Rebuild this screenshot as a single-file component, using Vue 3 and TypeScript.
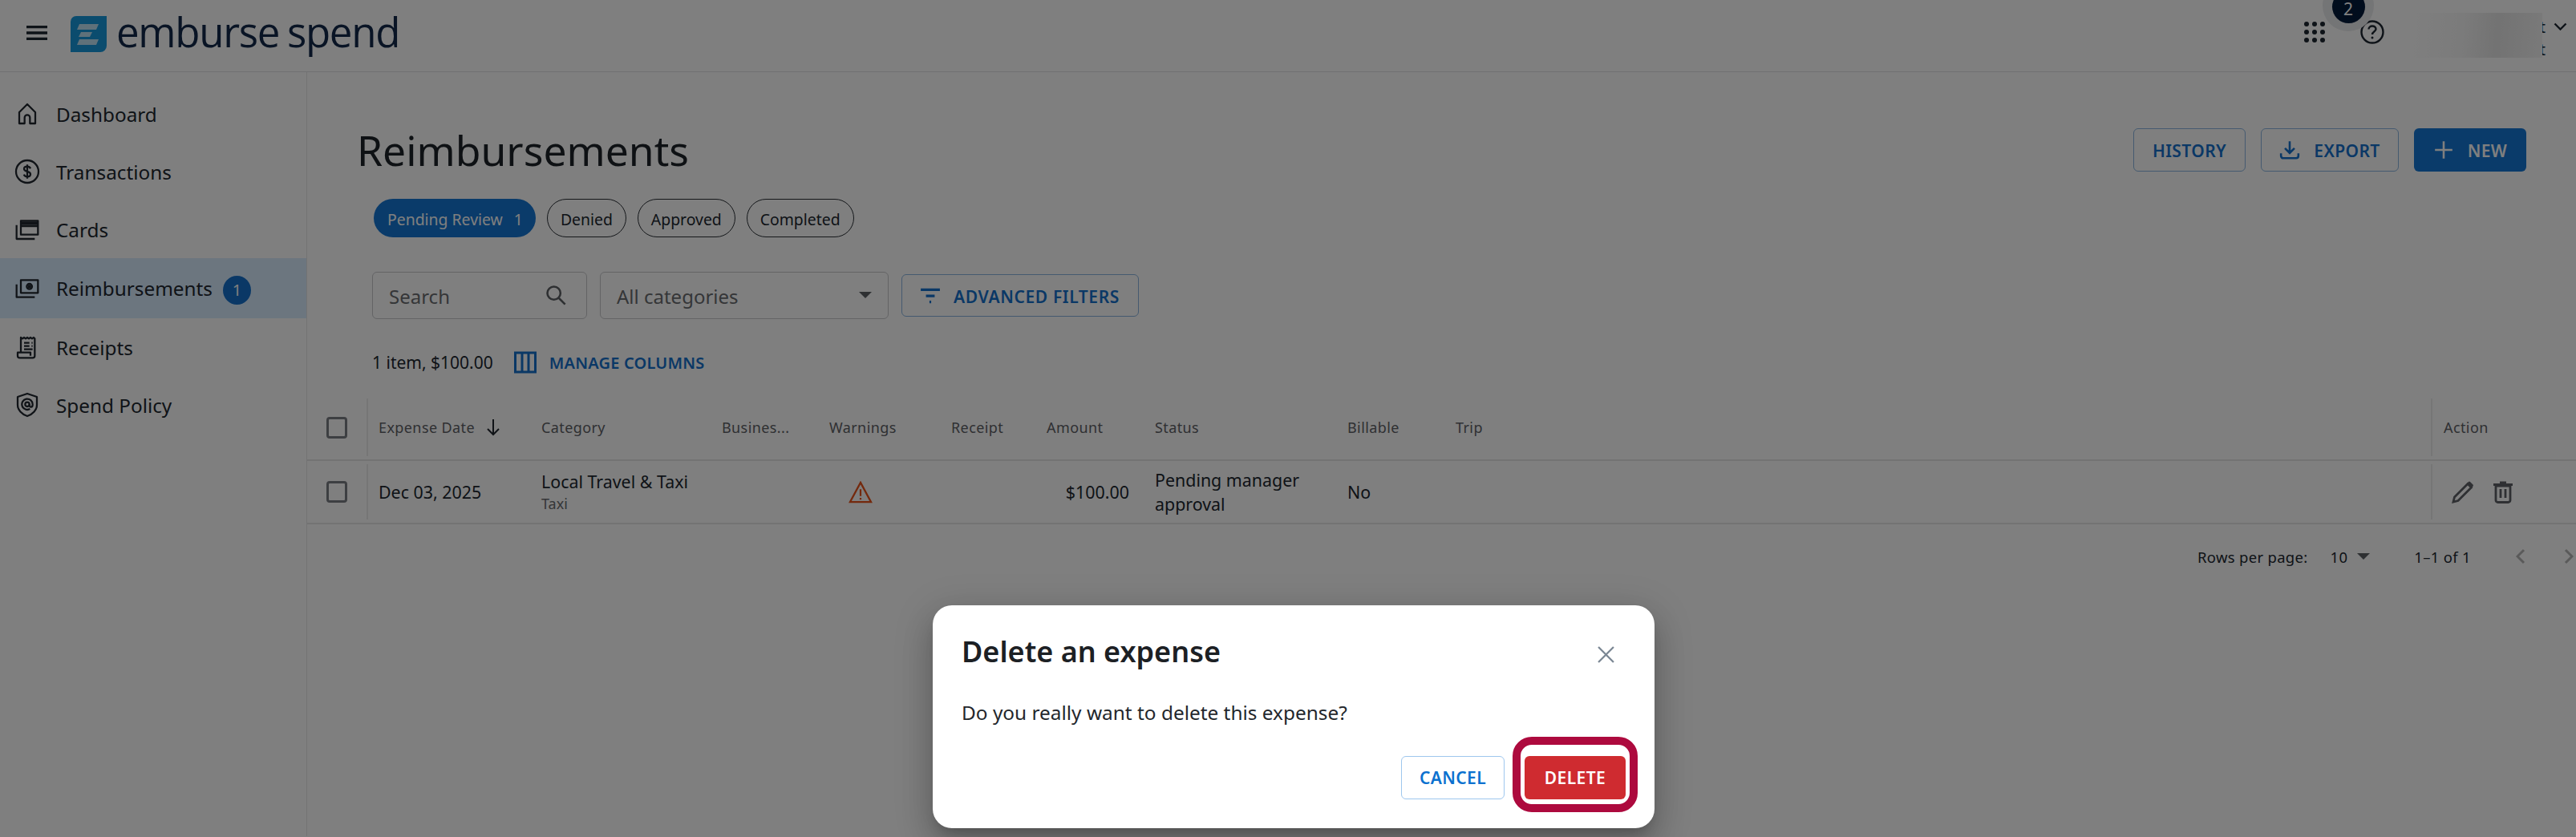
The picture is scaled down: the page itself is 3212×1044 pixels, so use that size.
<script setup lang="ts">
interface NavItem {
  label: string
  paths: string[]
  active?: boolean
  badge?: number
}

const navItems: NavItem[] = [
  { label: 'Dashboard', paths: ['M4.500 10.500 12 3l7.500 7.500V21h-5v-5.500a2.500 2.500 0 0 0-5 0V21h-5z'] },
  {
    label: 'Transactions',
    paths: [
      'M12 1.500a10.500 10.500 0 1 0 0 21 10.500 10.500 0 0 0 0-21z',
      'M15 9.200c-.5-1.200-1.600-1.900-3-1.900-1.700 0-3 .9-3 2.300 0 3.100 6 1.600 6 4.800 0 1.400-1.300 2.300-3 2.300-1.500 0-2.700-.7-3.100-2M12 5.500v13',
    ],
  },
  {
    label: 'Cards',
    paths: ['M6 4h16v13H6z', 'M2 8v13h17', 'M6 7h16M6 9h16M6 5.500h16'],
  },
  {
    label: 'Reimbursements',
    active: true,
    badge: 1,
    paths: ['M6 4h16v12H6z', 'M2 8v12h17', 'M14 7.500a2.500 2.500 0 1 0 0 5 2.500 2.500 0 0 0 0-5z', 'M13.200 9.300h1.600v1.400h-1.600z'],
  },
  {
    label: 'Receipts',
    paths: ['M6 17V3l1.500 1L9 3l1.500 1L12 3l1.500 1L15 3l1.500 1L18 3l1 1v16a2 2 0 0 1-2 2H5a2 2 0 0 1-2-2v-3h12v3', 'M9 8h5M16 8h1M9 11h5M16 11h1M9 14h8'],
  },
  {
    label: 'Spend Policy',
    paths: [
      'M12 1.500 21 4.500V12c0 4.800-3.800 8.800-9 10.500C6.800 20.800 3 16.800 3 12V4.500z',
      'M12 9.500a2 2 0 1 0 0 4 2 2 0 0 0 0-4z',
      'M14 11.500v1c0 2 3 2 3-.5v-.5a5 5 0 1 0-2.500 4.300',
    ],
  },
]

const statusChips = ['Denied', 'Approved', 'Completed']
const columns = ['Category', 'Busines...', 'Warnings', 'Receipt', 'Amount', 'Status', 'Billable', 'Trip']
</script>

<template>
  <div class="app">
    <header class="topbar">
      <svg class="menu" viewBox="0 0 26 18" aria-hidden="true">
        <path d="M0 1.500h26M0 9h26M0 16.500h26" />
      </svg>
      <svg class="logo-mark" viewBox="0 0 45 45" aria-hidden="true">
        <path class="logo-tile" d="M7 0h38v37a8 8 0 0 1-8 8H0V7a7 7 0 0 1 7-7z" />
        <path class="logo-bar" d="M11 10h24l-3 7H8zM13 20h14l-3 6H10zM11 29h24l-3 7H8z" />
      </svg>
      <span class="wordmark">emburse spend</span>
      <div class="top-actions">
        <svg class="apps" viewBox="0 0 26 26" aria-hidden="true">
          <circle v-for="p in [3, 13, 23].flatMap((y) => [3, 13, 23].map((x) => [x, y]))" :key="p.join()" :cx="p[0]" :cy="p[1]" r="3" />
        </svg>
        <svg class="help" viewBox="0 0 30 30" aria-hidden="true">
          <circle cx="15" cy="15" r="13.500" />
          <path d="M10.500 11.500c0-2.500 2-4 4.500-4s4.500 1.500 4.500 3.800c0 3.400-4.500 3.200-4.500 6.700" />
          <circle class="help-dot" cx="15" cy="22" r="1.500" />
        </svg>
        <div class="account">
          <div class="account-lines">
            <span>t</span>
            <span>t</span>
          </div>
          <div class="account-blur" />
          <svg class="account-caret" viewBox="0 0 16 10" aria-hidden="true">
            <path d="M1 1.500 8 8.500l7-7" />
          </svg>
        </div>
      </div>
      <div class="notify-halo"><span class="notify">2</span></div>
    </header>

    <div class="body">
      <nav class="sidebar">
        <a v-for="item in navItems" :key="item.label" class="nav-item" :class="{ active: item.active }">
          <svg class="nav-icon" viewBox="0 0 24 24" aria-hidden="true">
            <path v-for="d in item.paths" :key="d" :d="d" />
          </svg>
          <span>{{ item.label }}</span>
          <span v-if="item.badge" class="nav-badge">{{ item.badge }}</span>
        </a>
      </nav>

      <main class="main">
        <div class="page-head">
          <h1>Reimbursements</h1>
          <div class="head-actions">
            <button class="btn btn-outline history">HISTORY</button>
            <button class="btn btn-outline export">
              <svg class="btn-icon" viewBox="0 0 24 24" aria-hidden="true">
                <path d="M12 2v13M6.500 10l5.500 5.500 5.500-5.500M2 16v3a2.500 2.500 0 0 0 2.500 2.500h15A2.500 2.500 0 0 0 22 19v-3" />
              </svg>
              EXPORT
            </button>
            <button class="btn btn-fill new">
              <svg class="btn-icon" viewBox="0 0 24 24" aria-hidden="true">
                <path d="M12 2v20M2 12h20" />
              </svg>
              NEW
            </button>
          </div>
        </div>

        <div class="chips">
          <span class="chip chip-on">Pending Review<b>1</b></span>
          <span v-for="chip in statusChips" :key="chip" class="chip">{{ chip }}</span>
        </div>

        <div class="filters">
          <div class="field search">
            <span>Search</span>
            <svg viewBox="0 0 24 24" aria-hidden="true">
              <circle cx="10" cy="10" r="7" />
              <path d="m15 15 7 7" />
            </svg>
          </div>
          <div class="field select">
            <span>All categories</span>
            <i class="caret" />
          </div>
          <button class="btn btn-outline advanced">
            <svg class="btn-icon" viewBox="0 0 24 24" aria-hidden="true">
              <path d="M1 5h22M7 12h10M11 19h2" />
            </svg>
            ADVANCED FILTERS
          </button>
        </div>

        <div class="summary">
          <span>1 item, $100.00</span>
          <button class="link-btn">
            <svg viewBox="0 0 28 28" aria-hidden="true">
              <path d="M1.500 2h25v24h-25zM10 2v24M18 2v24" />
            </svg>
            MANAGE COLUMNS
          </button>
        </div>

        <div class="table">
          <div class="row head">
            <div class="cell check"><i class="box" /></div>
            <div class="cell sep date-head">
              Expense Date
              <svg viewBox="0 0 18 22" aria-hidden="true">
                <path d="M9 1v19M2 13l7 7 7-7" />
              </svg>
            </div>
            <div v-for="col in columns" :key="col" class="cell">{{ col }}</div>
            <div class="cell sep">Action</div>
          </div>
          <div class="row data">
            <div class="cell check"><i class="box" /></div>
            <div class="cell sep">Dec 03, 2025</div>
            <div class="cell stack">
              <span>Local Travel &amp; Taxi</span>
              <small>Taxi</small>
            </div>
            <div class="cell" />
            <div class="cell warn">
              <svg viewBox="0 0 32 30" aria-hidden="true">
                <path d="M16 2 30 28H2z" />
                <path d="M16 11v9M16 22.500v2.500" />
              </svg>
            </div>
            <div class="cell" />
            <div class="cell amount">$100.00</div>
            <div class="cell status">Pending manager approval</div>
            <div class="cell">No</div>
            <div class="cell" />
            <div class="cell sep actions">
              <svg viewBox="0 0 28 28" aria-hidden="true">
                <path class="pen-line" d="M2 26 3.500 20 20 3.500 24.500 8 8 24.500z" />
                <path class="pen-tip" d="m19 3 2-2a1.500 1.500 0 0 1 2 0l3.500 3.500a1.500 1.500 0 0 1 0 2l-2 2z" />
              </svg>
              <svg viewBox="0 0 24 28" aria-hidden="true">
                <path d="M3 6h18v18a2.500 2.500 0 0 1-2.500 2.500h-13A2.500 2.500 0 0 1 3 24zM0 4.500h24M8 2h8M9 10v11M15 10v11" />
              </svg>
            </div>
          </div>
        </div>

        <div class="pager">
          <span>Rows per page:</span>
          <span class="per-page">10</span>
          <i class="caret" />
          <span class="range">1–1 of 1</span>
          <svg viewBox="0 0 12 20" aria-hidden="true"><path d="M10 2 2 10l8 8" /></svg>
          <svg viewBox="0 0 12 20" aria-hidden="true"><path d="m2 2 8 8-8 8" /></svg>
        </div>
      </main>
    </div>

    <div class="backdrop" />

    <section class="dialog" role="dialog">
      <div class="dialog-head">
        <h2>Delete an expense</h2>
        <svg viewBox="0 0 20 20" aria-hidden="true"><path d="m1 1 18 18M19 1 1 19" /></svg>
      </div>
      <p>Do you really want to delete this expense?</p>
      <div class="dialog-actions">
        <button class="cancel">CANCEL</button>
        <div class="highlight"><button class="delete">DELETE</button></div>
      </div>
    </section>
  </div>
</template>

<style scoped>
.app {
  position: relative;
  width: 3212px;
  height: 1044px;
  overflow: hidden;
  background: #fff;
  color: #20272f;
  font-family: "Noto Sans", "Open Sans", sans-serif;
}

button { font-family: inherit; cursor: pointer; }

/* top bar */
.topbar {
  position: relative;
  display: flex;
  align-items: center;
  height: 90px;
  padding-left: 33px;
  box-sizing: border-box;
  border-bottom: 1px solid #e0e2e5;
}
.menu { width: 26px; height: 18px; margin-top: -8px; flex: none; }
.menu path { stroke: #1d2630; stroke-width: 3.400; fill: none; }
.logo-mark { width: 45px; height: 45px; margin: -5px 0 0 29px; flex: none; }
.logo-tile { fill: #1798dc; }
.logo-bar { fill: #fff; opacity: .72; }
.wordmark {
  margin: -12px 0 0 12px;
  font-family: "Open Sans", sans-serif;
  font-size: 51px;
  line-height: 60px;
  letter-spacing: -1.300px;
  word-spacing: -2px;
  color: #12294a;
}
.top-actions {
  display: flex;
  align-items: center;
  margin: -9px 0 0 auto;
  height: 80px;
}
.apps { width: 26px; height: 26px; margin-right: 44px; fill: #1d2630; }
.help { width: 30px; height: 32px; margin-right: 33px; }
.help circle, .help path { fill: none; stroke: #1d2630; stroke-width: 2.400; }
.help .help-dot { fill: #1d2630; stroke: none; }
.account { position: relative; width: 206px; height: 80px; }
.account-lines {
  position: absolute;
  left: 148px;
  top: 20px;
  display: flex;
  flex-direction: column;
  width: 20px;
  text-align: right;
  font-size: 20px;
  line-height: 28px;
}
.account-blur {
  position: absolute;
  left: 0;
  top: 16px;
  width: 164px;
  height: 56px;
  background: linear-gradient(95deg, #fff 0%, #f6f6f6 40%, #e6e6e6 65%, #f4f4f4 100%);
}
.account-caret { position: absolute; left: 178px; top: 28px; width: 17px; height: 10px; }
.account-caret path { fill: none; stroke: #1d2630; stroke-width: 2.400; }
.notify-halo {
  position: absolute;
  left: 2896px;
  top: -25px;
  display: grid;
  place-items: center;
  width: 64px;
  height: 64px;
  border-radius: 50%;
  background: #e9eaec;
}
.notify {
  display: grid;
  place-items: center;
  box-sizing: border-box;
  width: 41px;
  height: 41px;
  margin-top: 3px;
  padding-top: 4px;
  border-radius: 50%;
  background: #031b3a;
  color: #fff;
  font-size: 21px;
  line-height: 20px;
}

/* sidebar */
.body { display: flex; height: 953px; }
.sidebar {
  flex: none;
  width: 383px;
  box-sizing: border-box;
  padding-top: 16px;
  border-right: 1px solid #e6e7e9;
}
.nav-item {
  display: flex;
  align-items: center;
  gap: 20px;
  height: 72px;
  padding-left: 18px;
  font-size: 24.300px;
  color: #20272f;
}
.nav-item.active { height: 75px; background: #d9ecff; }
.nav-icon { width: 32px; height: 32px; flex: none; fill: none; stroke: #20272f; stroke-width: 1.700; stroke-linejoin: round; }
.nav-badge {
  display: grid;
  place-items: center;
  width: 35px;
  height: 36px;
  margin: 4px 0 0 -7px;
  border-radius: 50%;
  background: #1571cc;
  color: #fff;
  font-size: 20px;
}

/* page */
.main { flex: 1; min-width: 0; }
.page-head {
  display: flex;
  align-items: center;
  justify-content: space-between;
  height: 54px;
  margin-top: 70px;
  padding: 0 62px;
}
h1 { margin: 0; font-size: 51.600px; font-weight: 400; color: #1d2228; }
.head-actions { display: flex; gap: 19px; }

.btn {
  display: inline-flex;
  align-items: center;
  justify-content: center;
  box-sizing: border-box;
  height: 54px;
  padding: 2px 0 0;
  border-radius: 6px;
  font-size: 21px;
  font-weight: 600;
  letter-spacing: .4px;
}
.btn-outline { border: 1.500px solid #8ab5e0; background: #fff; color: #1570cc; }
.btn-fill { border: 0; background: #1476d4; color: #fff; }
.btn-icon { width: 26px; height: 26px; margin: -2px 17px 0 0; fill: none; stroke: currentColor; stroke-width: 2.400; }
.history { width: 140px; }
.export { width: 172px; }
.new { width: 140px; }

.chips { display: flex; gap: 14px; margin: 34px 0 0 83px; }
.chip {
  display: flex;
  align-items: center;
  box-sizing: border-box;
  height: 48px;
  padding: 2px 16px 0;
  border: 1.500px solid #2a2f35;
  border-radius: 24px;
  font-size: 19.400px;
  color: #20272f;
}
.chip-on { border: 0; padding-left: 17px; background: #1476d4; color: #fff; }
.chip-on b { margin-left: 14px; font-weight: 400; }

.filters { display: flex; align-items: center; gap: 16px; margin: 43px 0 0 81px; }
.field {
  display: flex;
  align-items: center;
  justify-content: space-between;
  box-sizing: border-box;
  height: 59px;
  padding: 2px 20px 0;
  border: 1.500px solid #c8c9cb;
  border-radius: 6px;
  font-size: 24px;
  color: #6a6d70;
}
.search { width: 268px; }
.search svg { width: 28px; height: 28px; margin: -4px 4px 0 0; fill: none; stroke: #5d6064; stroke-width: 2.200; }
.select { width: 360px; }
.select .caret { margin-top: -4px; }
.caret {
  display: block;
  width: 0;
  height: 0;
  border: 8px solid transparent;
  border-top: 8px solid #5d6064;
  border-bottom: 0;
}
.advanced { width: 296px; height: 53px; padding-right: 2px; letter-spacing: .6px; }
.advanced .btn-icon { width: 28px; margin-right: 15px; stroke-width: 3; }

.summary { display: flex; align-items: center; gap: 26px; height: 30px; margin: 39px 0 0 81px; font-size: 21px; }
.link-btn {
  display: flex;
  align-items: center;
  gap: 16px;
  padding: 0;
  border: 0;
  background: none;
  color: #1570cc;
  font-size: 20px;
  font-weight: 600;
  letter-spacing: .2px;
}
.link-btn svg { width: 28px; height: 28px; fill: none; stroke: #1570cc; stroke-width: 3; }

/* table */
.table { margin-top: 26px; }
.row {
  display: grid;
  grid-template-columns: 74px 202px 225px 134px 152px 119px 135px 240px 135px 1fr 181px;
  align-items: center;
  box-sizing: border-box;
  border-bottom: 2px solid #e6e6e6;
}
.row.head { height: 82px; font-size: 18px; letter-spacing: .4px; color: #5e6166; }
.row.data { height: 79px; font-size: 21.400px; color: #20272f; }
.cell { padding: 0 16px; box-sizing: border-box; min-width: 0; }
.check { display: flex; justify-content: center; padding: 0; }
.box { display: block; box-sizing: border-box; width: 26px; height: 27px; border: 3px solid #7b7e84; border-radius: 4px; }
.sep { display: flex; align-items: center; height: calc(100% - 8px); padding-left: 14px; border-left: 2px solid #ececec; }
.date-head { gap: 14px; padding-left: 13px; }
.row.data .sep:nth-child(2) { padding-left: 13px; }
.date-head svg { width: 18px; height: 22px; fill: none; stroke: #20272f; stroke-width: 2; }
.stack { display: flex; flex-direction: column; line-height: 30px; }
.stack small { font-size: 18px; color: #6a6d70; line-height: 25px; }
.warn { padding-left: 39px; }
.warn svg { display: block; width: 32px; height: 28px; fill: none; stroke: #e8531a; stroke-width: 2.400; }
.amount { text-align: right; }
.status { line-height: 30px; }
.actions { gap: 24px; padding-left: 24px; }
.actions svg { height: 28px; fill: none; stroke: #5e6166; stroke-width: 2.800; }
.actions svg:first-child { width: 28px; }
.actions svg:last-child { width: 24px; }
.actions .pen-tip { fill: #5e6166; stroke: none; }

.pager {
  display: flex;
  align-items: center;
  height: 80px;
  padding-left: 2357px;
  font-size: 18.500px;
  white-space: nowrap;
  color: #20272f;
  letter-spacing: .3px;
}
.pager .per-page { margin-left: 28px; }
.pager .caret { margin-left: 12px; }
.pager .range { margin-left: 55px; }
.pager svg { width: 12px; height: 20px; margin-left: 56px; fill: none; stroke: #b4b4b4; stroke-width: 3; flex: none; }
.pager svg:last-child { margin-left: 48px; }

/* dialog */
.backdrop { position: absolute; inset: 0; background: rgba(0, 0, 0, .5); }
.dialog {
  position: absolute;
  left: 1163px;
  top: 755px;
  display: flex;
  flex-direction: column;
  width: 900px;
  height: 278px;
  box-sizing: border-box;
  padding: 30px 35px 0 36px;
  border-radius: 24px;
  background: #fff;
  box-shadow: 0 11px 15px -7px rgba(0, 0, 0, .2), 0 24px 38px 3px rgba(0, 0, 0, .14), 0 9px 46px 8px rgba(0, 0, 0, .12);
}
.dialog-head { display: flex; align-items: center; justify-content: space-between; height: 54px; }
.dialog h2 { margin: 0; font-size: 36px; font-weight: 600; color: #1c2024; }
.dialog-head svg { width: 21px; height: 21px; margin: 8px 15px 0 0; fill: none; stroke: #7b8794; stroke-width: 2.200; }
.dialog p { margin: 33px 0 0; font-size: 24.400px; line-height: 34px; color: #23272c; }
.dialog-actions { display: flex; justify-content: flex-end; align-items: center; gap: 10px; margin: 13px -14px 0 0; }
.cancel, .delete {
  box-sizing: border-box;
  height: 54px;
  padding: 0;
  border-radius: 6px;
  font-size: 21px;
  font-weight: 600;
  letter-spacing: .4px;
}
.cancel { width: 129px; margin-top: 7px; border: 1.500px solid #9ec7ee; background: #fff; color: #0b71cf; }
.delete { width: 126px; border: 0; background: #cf2b30; color: #fff; }
.highlight {
  display: grid;
  place-items: center;
  box-sizing: border-box;
  width: 156px;
  height: 94px;
  padding-top: 7px;
  border: 10px solid #ad0a3e;
  border-radius: 24px;
}
</style>

<style>
html, body { margin: 0; overflow: hidden; }
</style>
